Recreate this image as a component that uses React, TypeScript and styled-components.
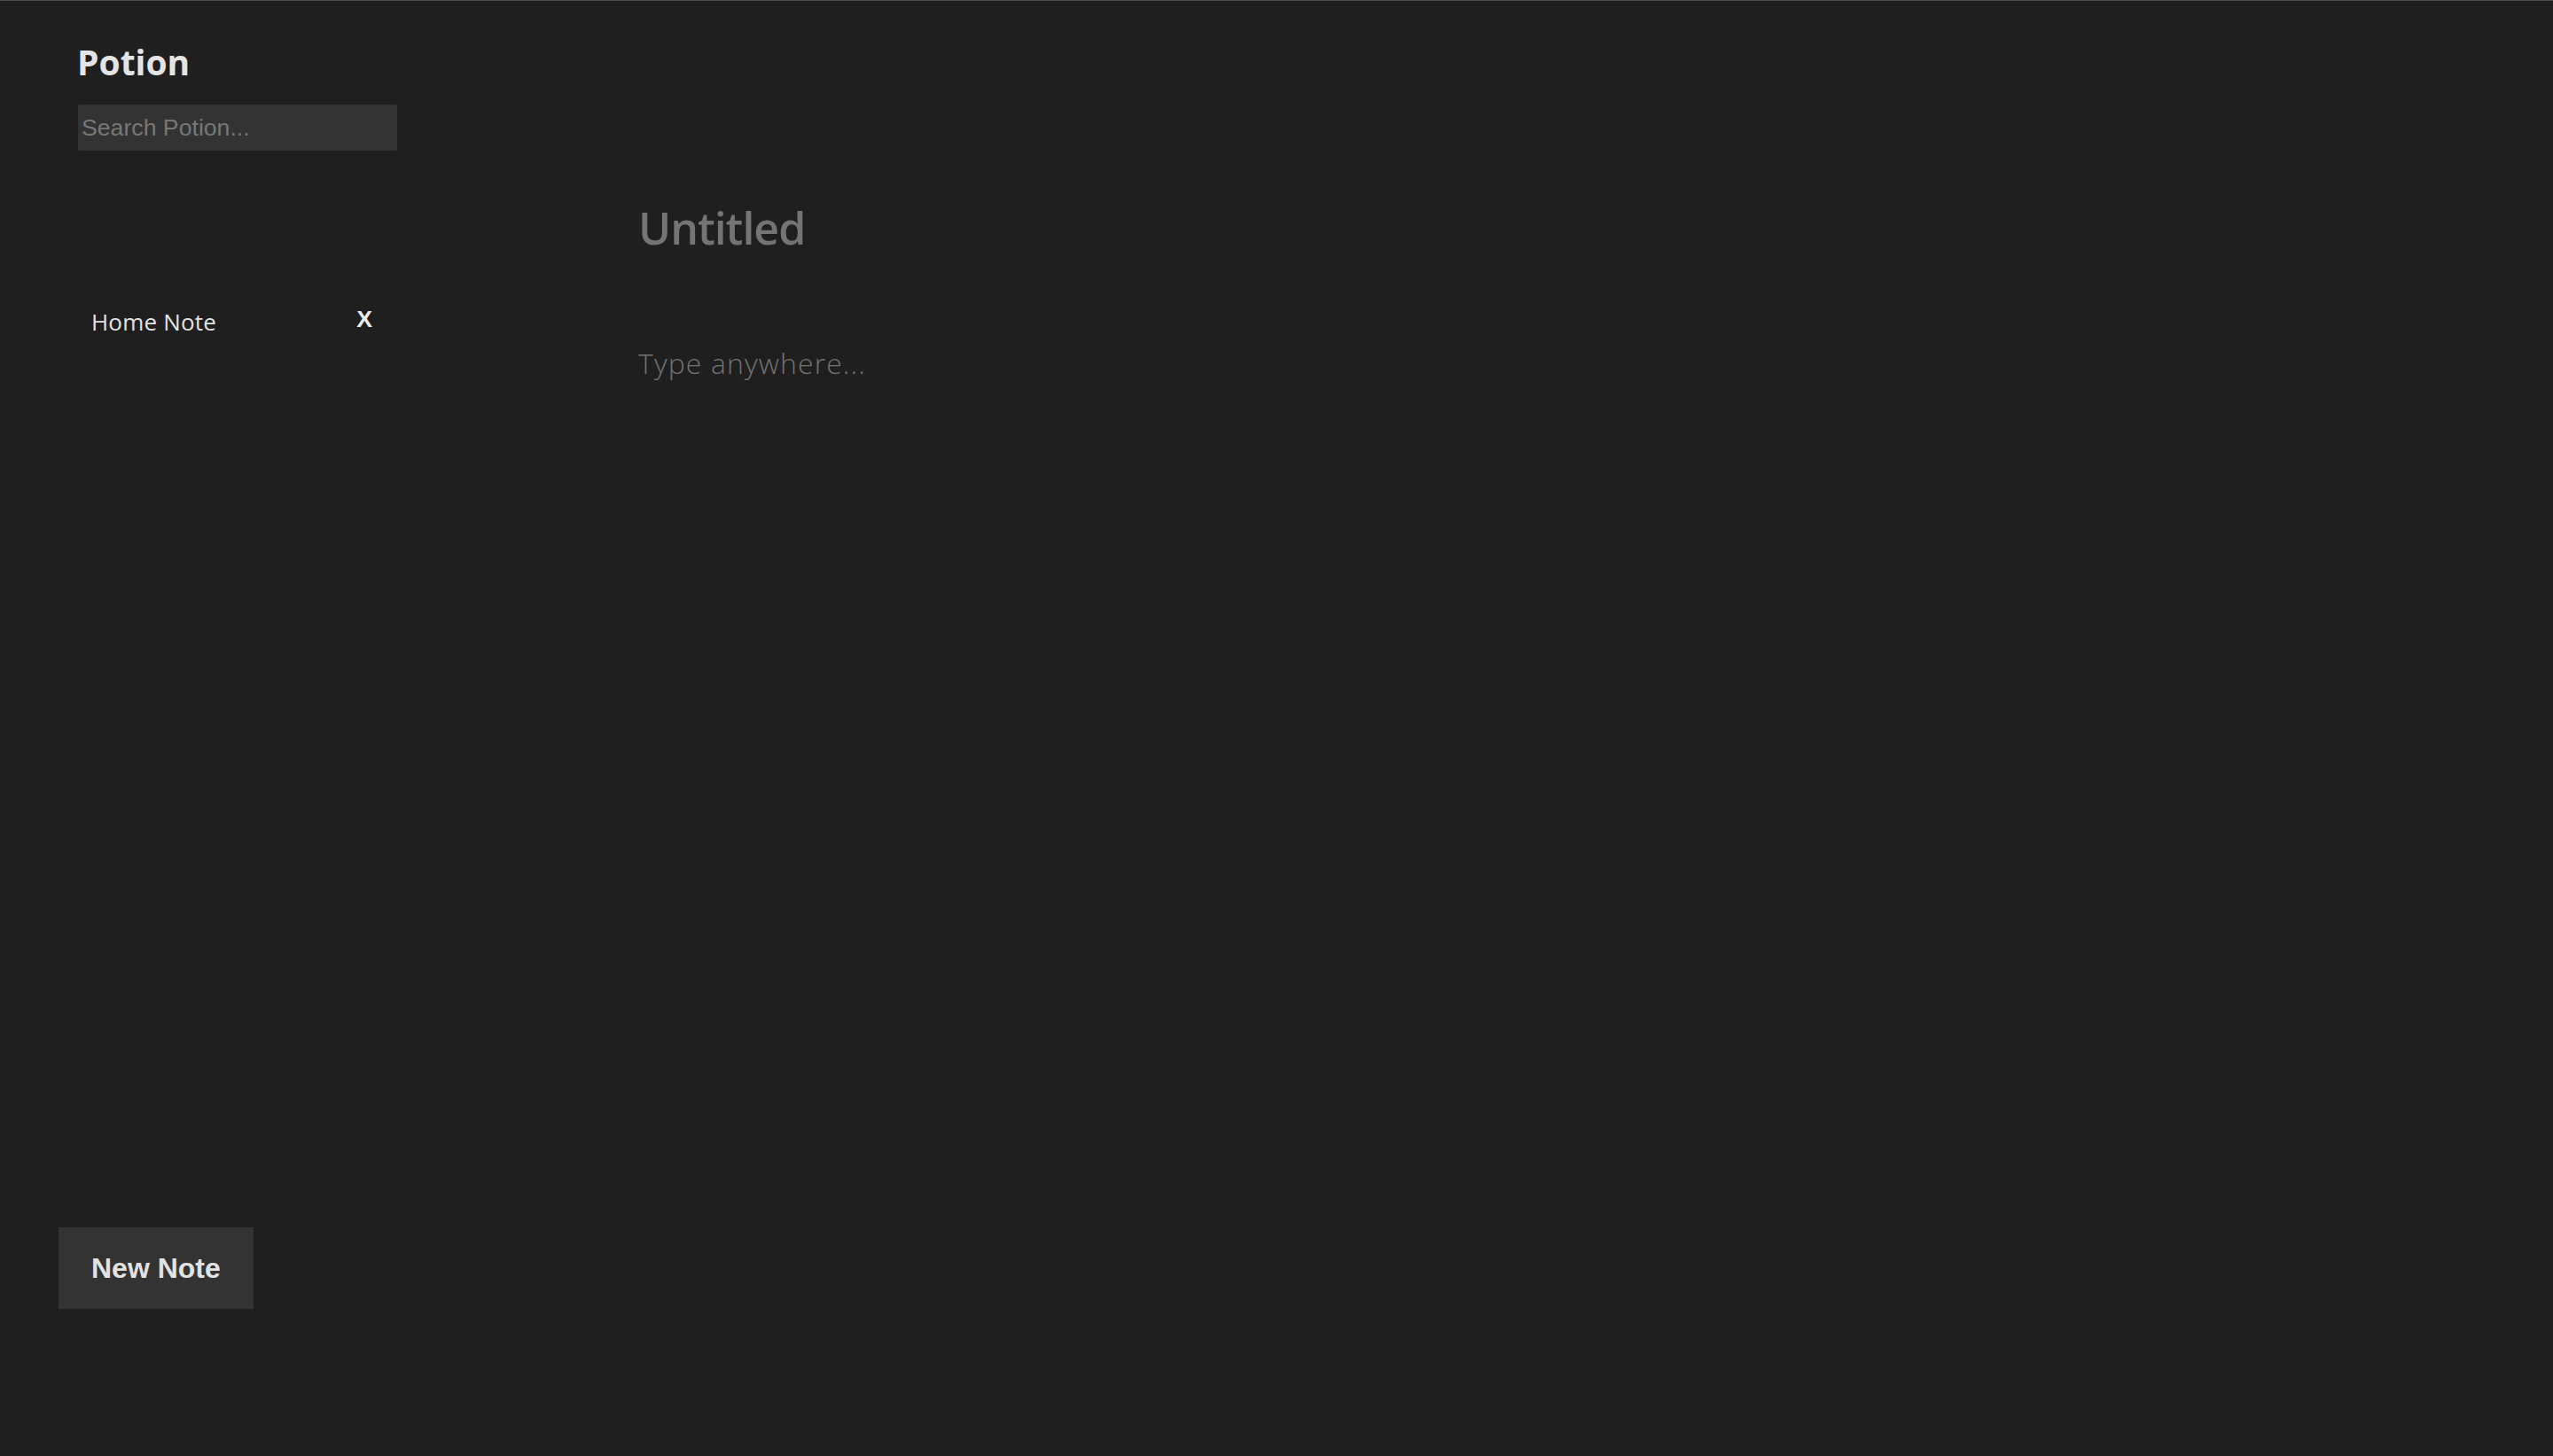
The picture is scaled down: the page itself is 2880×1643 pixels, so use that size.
import React from "react";
import styled, { createGlobalStyle } from "styled-components";

const Global = createGlobalStyle`
  * { box-sizing: border-box; }
  html, body { margin: 0; padding: 0; background: #1f1f1f; }
  body { font-family: "Open Sans", "Noto Sans", sans-serif; }
`;

const Shell = styled.div`
  display: grid;
  grid-template-columns: 600px 1fr;
  height: 1643px;
  border-top: 1px solid #4b4b4b;
  background: #1f1f1f;
  overflow: hidden;
`;

const Sidebar = styled.aside`
  display: flex;
  flex-direction: column;
  padding: 45px 0 166px 66px;
`;

const Top = styled.div`
  display: flex;
  flex-direction: column;
  padding-left: 21px;
`;

const Brand = styled.h1`
  margin: 0;
  font-family: "Open Sans", sans-serif;
  font-weight: 700;
  font-size: 39px;
  line-height: 48px;
  color: #e4e4e4;
`;

const Search = styled.input`
  margin-top: 24px;
  margin-left: 1px;
  width: 360px;
  height: 52px;
  padding: 0 4px;
  border: none;
  border-radius: 2px;
  background: #333333;
  color: #dddddd;
  font-family: "Liberation Sans", Arial, sans-serif;
  font-size: 26.67px;
  outline: none;
  &::placeholder { color: #777777; }
`;

const NoteList = styled.ul`
  list-style: none;
  margin: 173px 0 0;
  padding: 0;
  width: 361px;
`;

const NoteItem = styled.li`
  display: flex;
  align-items: center;
  justify-content: space-between;
  height: 40px;
  padding: 0 28px 0 16px;
`;

const NoteTitle = styled.span`
  font-family: "Open Sans", sans-serif;
  font-size: 26px;
  line-height: 40px;
  letter-spacing: 0.2px;
  color: #e2e2e2;
`;

const CloseButton = styled.button`
  border: none;
  background: none;
  padding: 0;
  margin-top: -6px;
  font-family: "Liberation Sans", Arial, sans-serif;
  font-weight: 700;
  font-size: 26.67px;
  line-height: 30px;
  color: #ececec;
  cursor: pointer;
`;

const Footer = styled.div`
  margin-top: auto;
`;

const NewNoteButton = styled.button`
  height: 92px;
  padding: 0 37px;
  border: none;
  background: #333333;
  color: #e2e2e2;
  font-family: "Liberation Sans", Arial, sans-serif;
  font-weight: 700;
  font-size: 32px;
  cursor: pointer;
`;

const Main = styled.main`
  display: flex;
  flex-direction: column;
  padding: 224px 0 0 120px;
`;

const TitleInput = styled.input`
  width: 1400px;
  height: 64px;
  padding: 0;
  border: none;
  background: transparent;
  font-family: "Open Sans", sans-serif;
  font-weight: 600;
  font-size: 50px;
  line-height: 64px;
  letter-spacing: -1px;
  color: #dddddd;
  outline: none;
  &::placeholder { color: #747474; }
`;

const Body = styled.textarea`
  margin-top: 99px;
  width: 1400px;
  height: 600px;
  padding: 0;
  border: none;
  resize: none;
  background: transparent;
  font-family: "Open Sans", sans-serif;
  font-weight: 300;
  font-size: 32px;
  line-height: 44px;
  letter-spacing: 1.1px;
  color: #dddddd;
  outline: none;
  &::placeholder { color: #727272; }
`;

export default function App() {
  return (
    <>
      <Global />
      <Shell>
        <Sidebar>
          <Top>
            <Brand>Potion</Brand>
            <Search placeholder="Search Potion..." />
            <NoteList>
              <NoteItem>
                <NoteTitle>Home Note</NoteTitle>
                <CloseButton>X</CloseButton>
              </NoteItem>
            </NoteList>
          </Top>
          <Footer>
            <NewNoteButton>New Note</NewNoteButton>
          </Footer>
        </Sidebar>
        <Main>
          <TitleInput placeholder="Untitled" />
          <Body placeholder="Type anywhere..." />
        </Main>
      </Shell>
    </>
  );
}
